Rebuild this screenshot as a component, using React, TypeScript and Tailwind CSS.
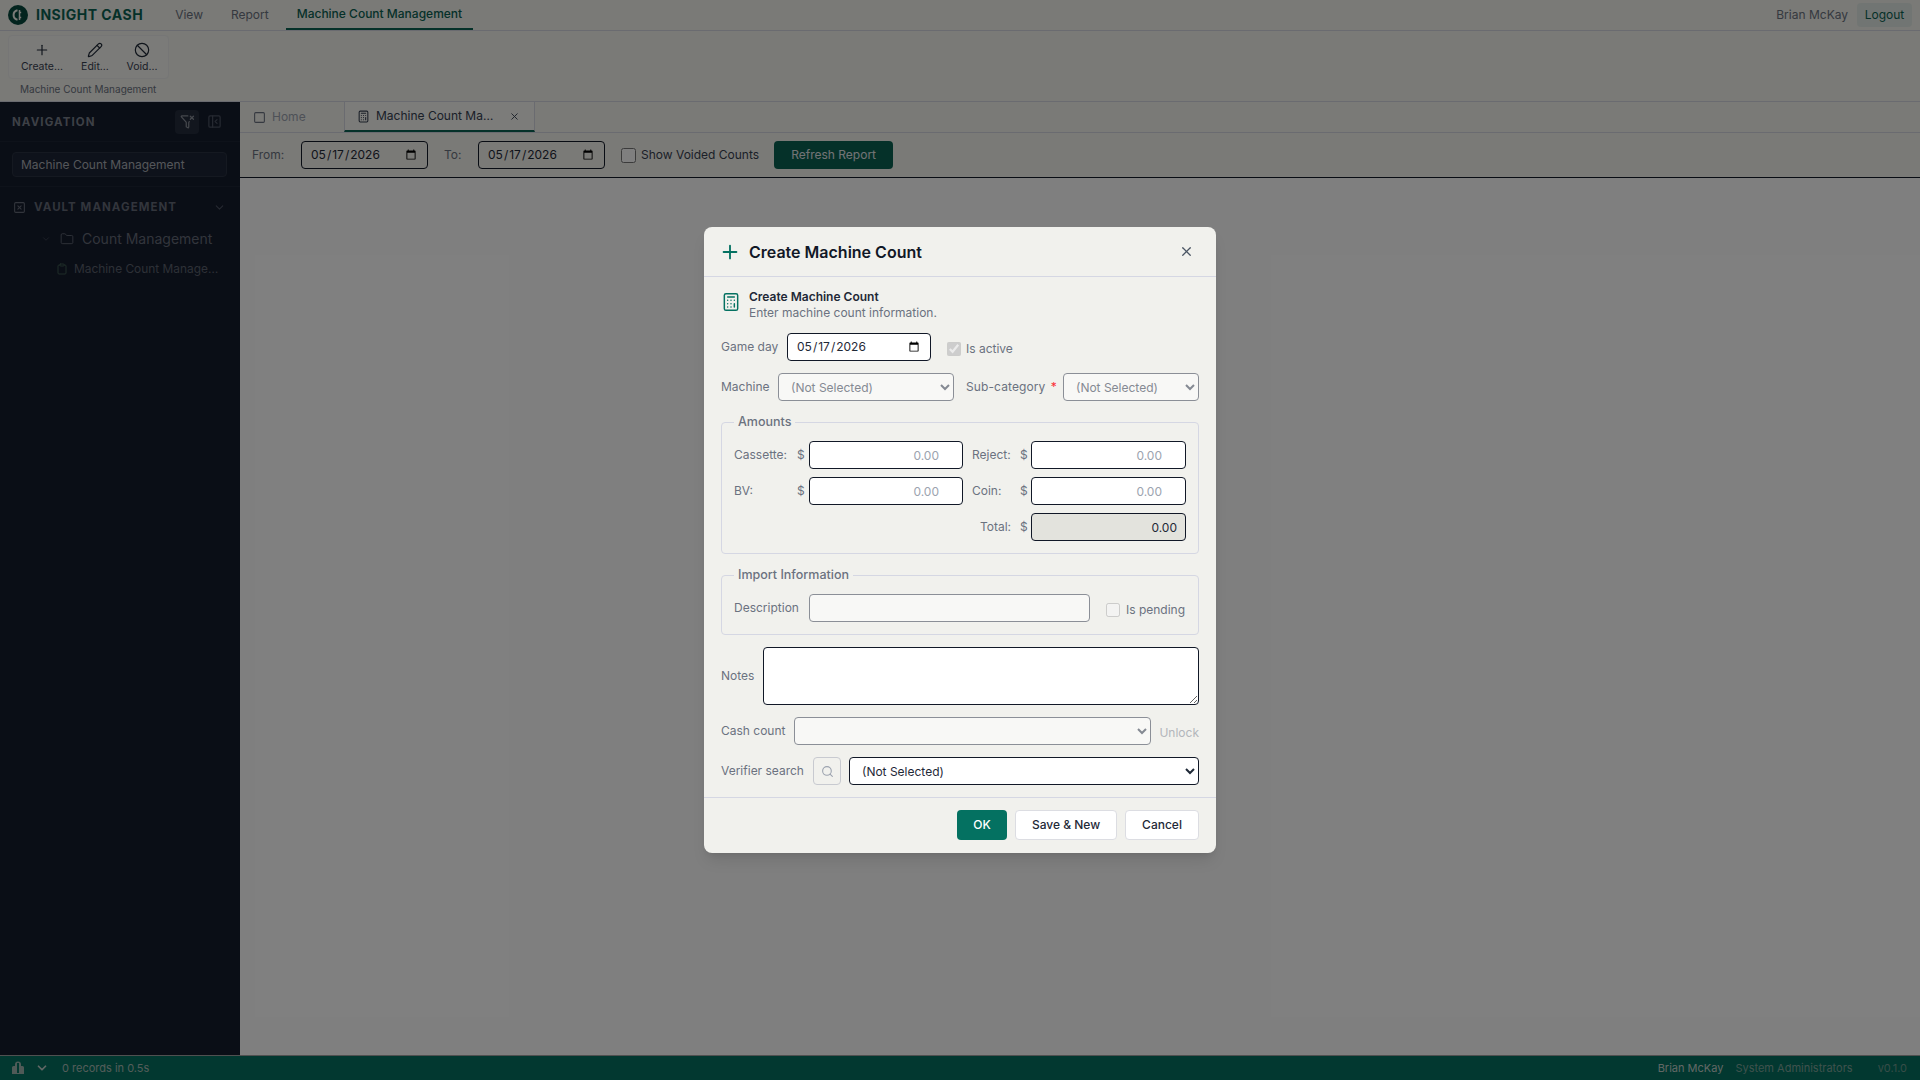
import React from "react";
import { Plus, Pencil, Ban, FunnelX, Calculator, X, Search, Folder, Clipboard, ChevronDown, PanelLeftClose, SquareX, Square } from "lucide-react";

const dark = "h-7 rounded border border-[#111827] bg-white text-[12px] text-[#1f2937] outline-none";
const muted = "h-7 rounded border border-[#8b8f97] bg-[#f8f8f6] text-[12px] text-[#858a93] outline-none";
const label = "text-[12px] leading-4 text-[#6b7280] shrink-0";

function Amount({ disabled }: { disabled?: boolean }) {
  return disabled ? (
    <input readOnly value="0.00" className={`${dark} min-w-0 w-full !bg-[#e3e3dd] px-2 text-right`} />
  ) : (
    <input readOnly placeholder="0.00" className={`${dark} min-w-0 w-full pr-[23px] pl-2 text-right placeholder:text-[#9ca3af]`} />
  );
}

function Logo() {
  return (
    <svg width="20" height="20" viewBox="0 0 20 20" className="shrink-0">
      <circle cx="10" cy="10" r="10" fill="#06483d" />
      <path d="M9.5 5.2A4.9 4.9 0 0 0 9.5 14.8" fill="none" stroke="#f4f4ee" strokeWidth="2" />
      <path d="M11.5 5v10M13.2 7.5h-2.5M13.2 12.5h-2.5" fill="none" stroke="#f4f4ee" strokeWidth="1.5" />
    </svg>
  );
}

export default function App() {
  return (
    <div className="relative flex h-[1080px] w-[1920px] flex-col overflow-hidden bg-white font-['Inter','Liberation_Sans',sans-serif]">
      {/* top menu */}
      <header className="flex h-[31px] shrink-0 items-stretch justify-between border-b border-[#d5d7e0] bg-[#f4f4ee]">
        <div className="flex items-stretch">
          <div className="flex items-center gap-2 pl-2 pb-[1px]">
            <Logo />
            <span className="text-[14px] font-bold tracking-[0.5px] text-[#0b6253]">INSIGHT CASH</span>
          </div>
          <nav className="ml-[32px] flex items-stretch text-[12px] text-[#6b7280]">
            <span className="flex items-center">View</span>
            <span className="ml-[28px] flex items-center">Report</span>
            <span className="ml-[17px] flex items-center border-b-2 border-[#0b6253] px-[11px] pb-[1px] font-medium text-[#0b6253]">Machine Count Management</span>
          </nav>
        </div>
        <div className="flex items-center gap-[9px] pr-2 pb-[1px]">
          <span className="text-[12px] text-[#6b7280]">Brian McKay</span>
          <span className="flex h-6 w-[55px] items-center justify-center rounded bg-[#e3ebe6] text-[12px] text-[#0b6253]">Logout</span>
        </div>
      </header>
      {/* ribbon */}
      <section className="h-[71px] shrink-0 border-b border-[#d5d7e0] bg-[#f4f4ee] pl-2 pt-1">
        <div className="flex h-11 w-[161px] items-start rounded border border-[#ecedec] bg-[#f6f6f2] pl-[8px] text-[#1f2937]">
          {[
            { I: Plus, t: "Create...", w: "w-[50px]" },
            { I: Pencil, t: "Edit...", w: "w-[56px] " },
            { I: Ban, t: "Void...", w: "w-[38px]" },
          ].map(({ I, t, w }) => (
            <div key={t} className={`flex ${w} flex-col items-center pt-[6px]`}>
              <I size={16} strokeWidth={1.75} />
              <span className="mt-[2px] whitespace-nowrap text-[10.5px] leading-[14px] text-[#374151]">{t}</span>
            </div>
          ))}
        </div>
        <div className="ml-3 mt-[3px] text-[10px] leading-[14px] text-[#6b7280]">Machine Count Management</div>
      </section>
      <div className="flex min-h-0 flex-1">
        {/* sidebar */}
        <aside className="flex w-[240px] shrink-0 flex-col bg-[#151c2c]">
          <div className="flex h-[40px] shrink-0 items-center justify-between border-b border-[#1c2435] pl-3 pr-[18px]">
            <span className="pt-[2px] text-[11.5px] font-bold tracking-[1.1px] text-[#7a808c]">NAVIGATION</span>
            <div className="flex items-center gap-[8px]">
              <span className="flex h-6 w-6 items-center justify-center rounded bg-[#242c3d] text-[#8a8f99]"><FunnelX size={15} /></span>
              <PanelLeftClose size={15} className="text-[#4b5262]" />
            </div>
          </div>
          <div className="h-[45px] shrink-0 border-b border-[#1c2435] px-3 pt-[10px]">
            <div className="flex h-[25px] w-[215px] items-center rounded border border-[#2a3242] bg-[#1d2536] px-2 text-[12px] text-[#a9adb5]">Machine Count Management</div>
          </div>
          <div className="flex items-center pl-[13px] pr-[14px] pt-[12px]">
            <SquareX size={13} className="text-[#646a78]" />
            <span className="ml-[8px] flex-1 text-[11.5px] font-bold tracking-[1.05px] text-[#646a78]">VAULT MANAGEMENT</span>
            <ChevronDown size={13} className="text-[#4b5262]" />
          </div>
          <div className="mt-[14px] flex items-center pl-[41px] text-[#646a78]">
            <ChevronDown size={10} className="text-[#3d4454]" />
            <Folder size={14} strokeWidth={1.5} className="ml-[9px]" />
            <span className="ml-[8px] text-[14px] leading-[18px]">Count Management</span>
          </div>
          <div className="mt-[12px] flex items-center pl-[56px] text-[11.9px] text-[#5b616e]">
            <Clipboard size={12} className="text-[#3d5a50]" />
            <span className="ml-[6px] w-[146px] truncate">Machine Count Management</span>
          </div>
        </aside>
        {/* main */}
        <main className="flex min-w-0 flex-1 flex-col bg-white">
          <div className="flex h-[31px] shrink-0 border-b border-[#d5d7e0] bg-[#f4f4ee] text-[12px]">
            <div className="flex w-[104px] items-center pl-[13px] text-[#9ca3af]">
              <Square size={13} className="text-[#6b7280]" />
              <span className="ml-[6px]">Home</span>
            </div>
            <div className="flex w-[191px] items-center border-x border-b-2 border-x-[#d5d7e0] border-b-[#0b6253] bg-[#f8f8f5] pl-[12px] text-[#374151]">
              <Calculator size={13} />
              <span className="ml-[6px] w-[118px] truncate">Machine Count Management</span>
              <X size={11} className="ml-[15px]" />
            </div>
          </div>
          <div className="flex h-[45px] shrink-0 items-center border-b border-[#111827] bg-[#f4f4ee] pl-3 text-[12px] text-[#6b7280]">
            <span className="w-[49px]">From:</span>
            <input type="date" defaultValue="2026-05-17" className={`${dark} w-[127px] !bg-[#f4f4ee] pl-2 pr-2`} />
            <span className="ml-4 w-[34px]">To:</span>
            <input type="date" defaultValue="2026-05-17" className={`${dark} w-[127px] !bg-[#f4f4ee] pl-2 pr-2`} />
            <input type="checkbox" className="ml-4 h-[15px] w-[15px]" />
            <span className="ml-[5px] text-[#374151]">Show Voided Counts</span>
            <button className="ml-[15px] h-[28px] w-[119px] rounded bg-[#0b6253] text-[12px] text-[#e5e7eb]">Refresh Report</button>
          </div>
          <div className="flex-1" />
        </main>
      </div>
      {/* status */}
      <footer className="flex h-[25px] shrink-0 items-center justify-between border-t border-[#a0a0a0] bg-[#047161] pl-3 pr-[13px] text-[11px] text-[#c3cfcb]">
        <div className="flex items-center">
          <svg width="12" height="14" viewBox="0 0 12 14" className="text-[#9fb5ae]"><path fill="currentColor" d="M3 5V3.5a3 3 0 0 1 6 0V5h1.500A1.500 1.500 0 0 1 12 6.500V13H0V6.500A1.500 1.500 0 0 1 1.500 5zM5 2v10h2V2z" /></svg>
          <ChevronDown size={14} strokeWidth={3} className="ml-[11px] text-[#c3cfcb]" />
          <span className="ml-[13px] text-[#a7bab4]">0 records in 0.5s</span>
        </div>
        <div className="flex items-center">
          <span>Brian McKay</span>
          <span className="ml-3 text-[#7fa49b]">System Administrators</span>
          <span className="ml-[25px] text-[#6e9a90]">v0.1.0</span>
        </div>
      </footer>

      {/* modal */}
      <div className="absolute inset-0 flex items-center justify-center bg-black/50">
        <div className="flex w-[512px] flex-col rounded-lg bg-[#f1f1ed] shadow-lg">
          <div className="flex h-[50px] items-center border-b border-[#d5d7e3] pl-[15px] pr-[22px]">
            <Plus size={22} className="text-[#047161]" />
            <h2 className="ml-[8px] flex-1 text-[16px] font-semibold text-[#111827]">Create Machine Count</h2>
            <X size={15} className="text-[#4b5563]" />
          </div>
          <div className="flex flex-col gap-3 px-[17px] pt-[12px] pb-3">
            <div className="flex">
              <Calculator size={20} className="mt-[3px] text-[#047161]" strokeWidth={1.75} />
              <div className="ml-[8px] text-[12px] leading-4">
                <div className="font-semibold text-[#1f2937]">Create Machine Count</div>
                <div className="text-[#6b7280]">Enter machine count information.</div>
              </div>
            </div>
            <div className="flex h-7 items-center">
              <span className={`${label} w-[66px]`}>Game day</span>
              <input type="date" defaultValue="2026-05-17" className={`${dark} w-[144px] pl-2 pr-2`} />
              <input type="checkbox" disabled defaultChecked className="ml-4 mt-[3px] h-[14px] w-[14px]" />
              <span className="ml-[5px] mt-[3px] text-[12px] text-[#6b7280]">Is active</span>
            </div>
            <div className="flex h-7 items-center">
              <span className={`${label} w-[57px]`}>Machine</span>
              <select disabled className={`${muted} w-[176px] pl-2`}><option>(Not Selected)</option></select>
              <span className={`${label} ml-3 w-[97px] tracking-[0.1px]`}>Sub-category <span className="ml-[2px] text-red-500">*</span></span>
              <select disabled className={`${muted} w-[136px] pl-2`}><option>(Not Selected)</option></select>
            </div>
            <fieldset className="rounded border border-[#d5d7e3] px-3 pb-[12px] pt-[10px]">
              <legend className="px-1 text-[12.5px] font-medium leading-[18px] text-[#6b7280]">Amounts</legend>
              <div className="grid grid-cols-[63px_12px_154px_57px_11px_155px] items-center gap-y-2 text-[12px] text-[#6b7280]">
                <span>Cassette:</span><span>$</span><Amount />
                <span className="pl-[9px]">Reject:</span><span>$</span><Amount />
                <span>BV:</span><span>$</span><Amount />
                <span className="pl-[9px]">Coin:</span><span>$</span><Amount />
                <span className="col-start-4 pr-[9px] text-right">Total:</span><span>$</span><Amount disabled />
              </div>
            </fieldset>
            <fieldset className="rounded border border-[#d5d7e3] px-3 pb-[12px] pt-[10px]">
              <legend className="px-1 text-[12.5px] font-medium leading-[18px] text-[#6b7280]">Import Information</legend>
              <div className="flex h-7 items-center">
                <span className={`${label} w-[75px]`}>Description</span>
                <input disabled className={`${muted} w-[281px] px-2`} />
                <input type="checkbox" disabled className="ml-4 mt-[3px] h-[14px] w-[14px]" />
                <span className="ml-[6px] mt-[3px] whitespace-nowrap text-[12px] text-[#6b7280]">Is pending</span>
              </div>
            </fieldset>
            <div className="flex items-center">
              <span className={`${label} w-[42px]`}>Notes</span>
              <textarea readOnly className="h-[58px] w-[436px] rounded border border-[#111827] bg-white outline-none" />
            </div>
            <div className="flex h-7 items-center">
              <span className={`${label} w-[73px]`}>Cash count</span>
              <select disabled className={`${muted} w-[358px]`}><option></option></select>
              <span className="ml-2 mt-[3px] whitespace-nowrap text-[12px] text-[#b3b6bb]">Unlock</span>
            </div>
            <div className="flex h-7 items-center">
              <span className={`${label} w-[92px]`}>Verifier search</span>
              <button className="flex h-7 w-7 items-center justify-center rounded border border-[#c8cad0] text-[#9ca3af]"><Search size={13} /></button>
              <select className={`${dark} ml-2 w-[350px] pl-2`}><option>(Not Selected)</option></select>
            </div>
          </div>
          <div className="flex h-[56px] items-center justify-end gap-2 border-t border-[#d5d7e3] pb-[2px] pr-[17px] text-[12px] font-medium text-[#1f2937]">
            <button className="h-[30px] w-[50px] rounded bg-[#047161] text-white">OK</button>
            <button className="h-[30px] w-[102px] rounded border border-[#dcdde2] bg-white">Save &amp; New</button>
            <button className="h-[30px] w-[74px] rounded border border-[#dcdde2] bg-white">Cancel</button>
          </div>
        </div>
      </div>
    </div>
  );
}
